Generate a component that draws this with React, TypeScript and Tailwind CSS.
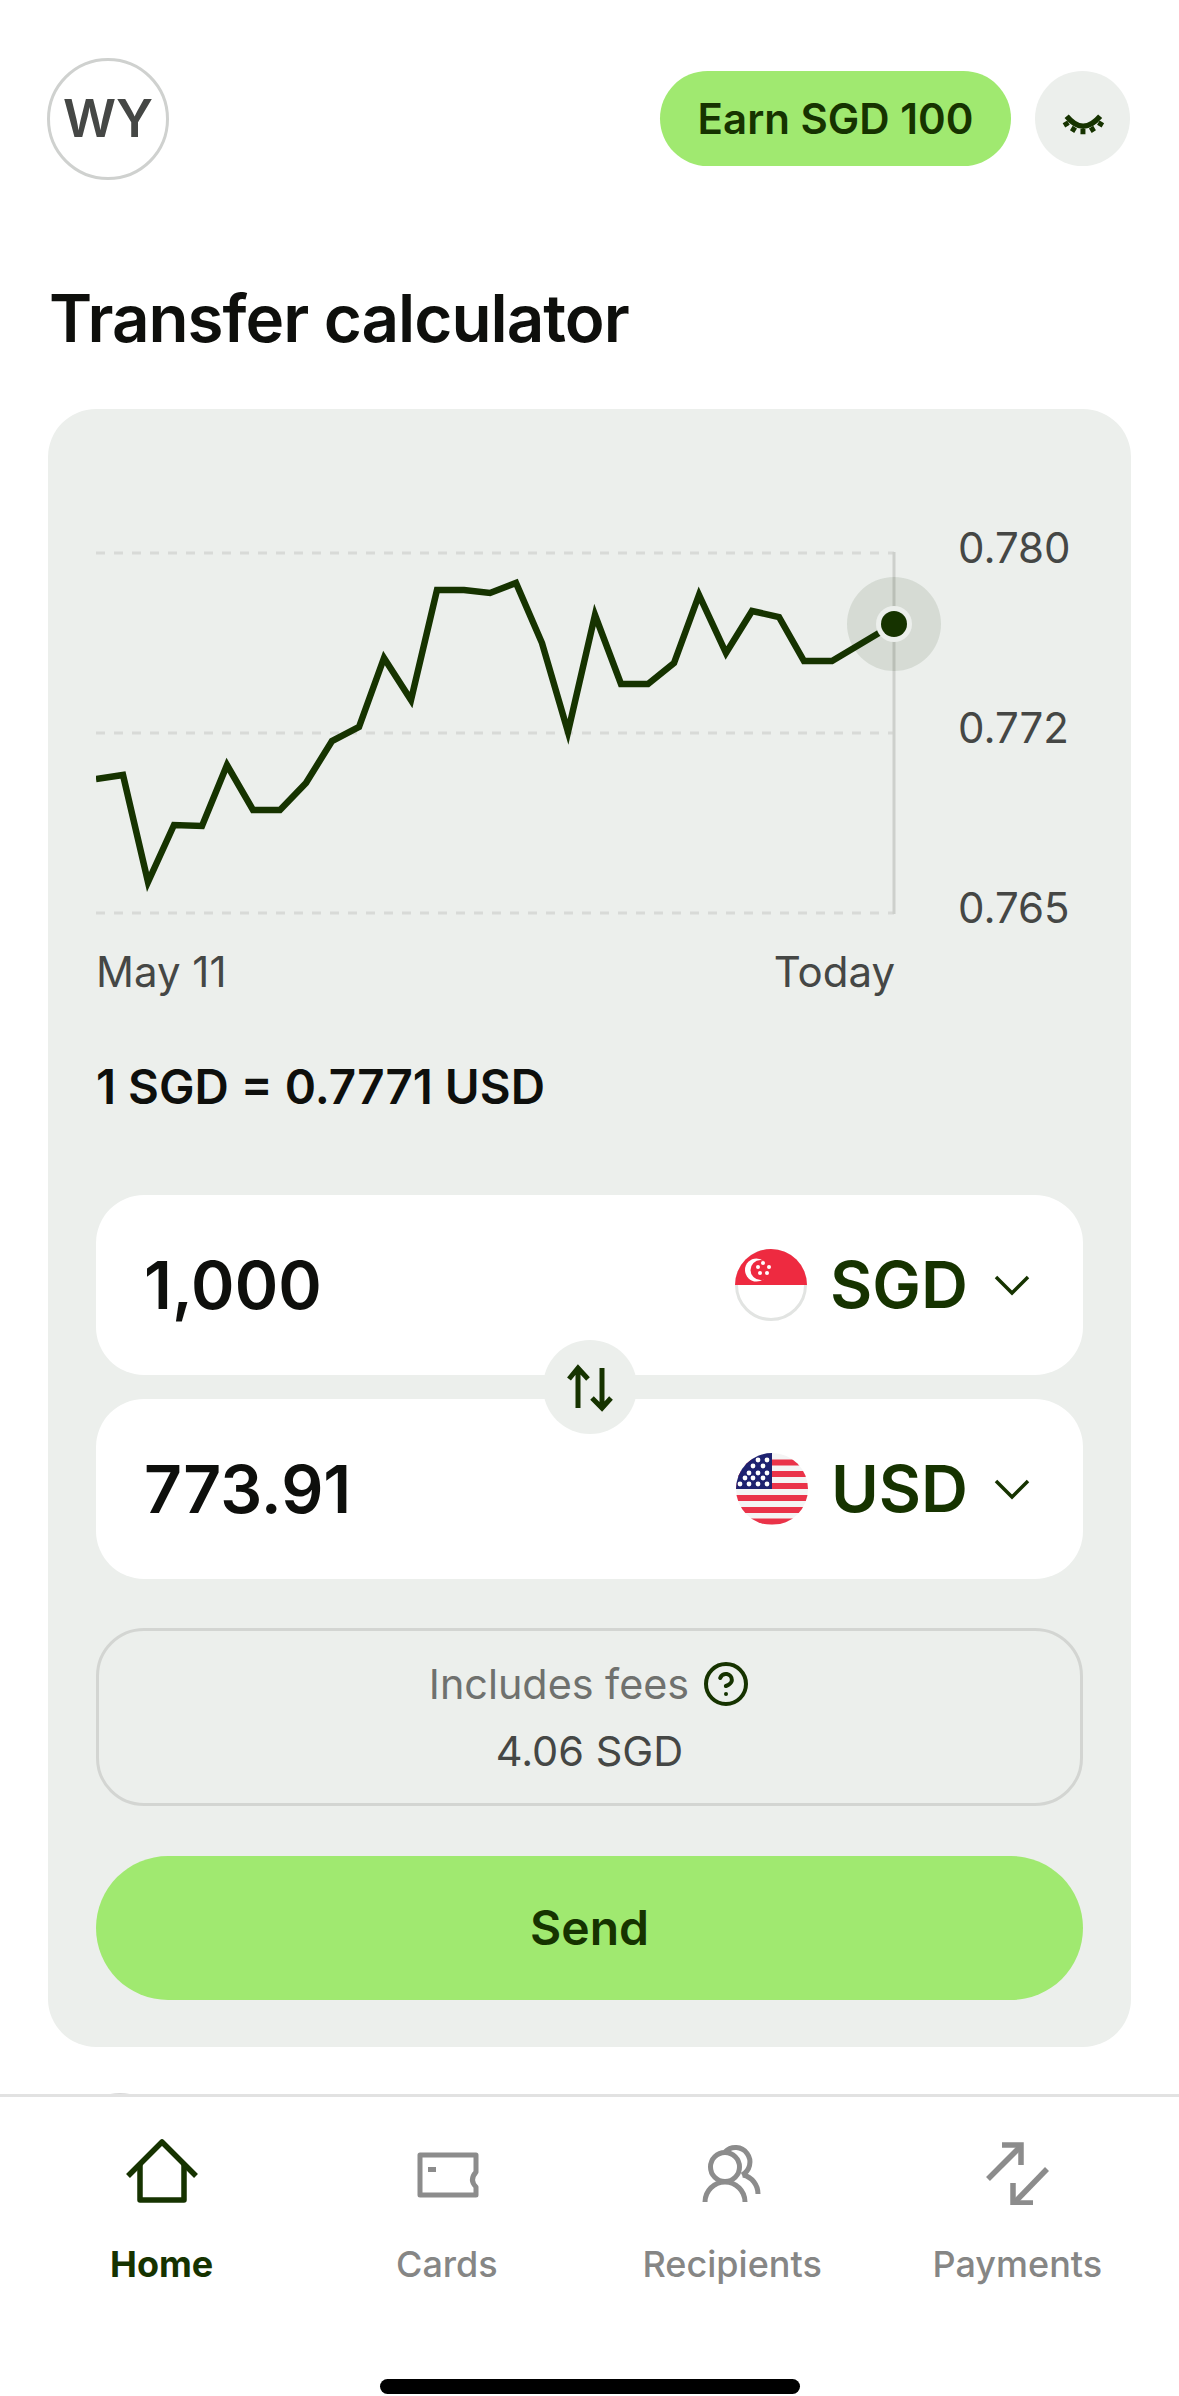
import React from 'react';
import { CircleHelp } from 'lucide-react';

const chartPoints = [
  [96, 779], [123, 775], [148, 882], [174, 825], [202, 826], [227, 765], [253, 810], [280, 810],
  [306, 783], [332, 741], [359, 727], [384, 658], [411, 700], [437, 590], [464, 590], [490, 593],
  [516, 583], [542, 643], [568, 732], [595, 615], [621, 684], [648, 684], [674, 663], [699, 595],
  [726, 653], [752, 611], [779, 617], [804, 661], [832, 661], [894, 624],
];

const usStars = [
  [22, 7], [31, 7], [17, 13], [27, 13], [13, 20], [22, 20], [31, 20], [9, 25], [17, 25], [27, 25],
  [4, 31], [13, 31], [22, 31], [31, 31],
];

function SgFlag() {
  return (
    <svg width="72" height="72" viewBox="0 0 72 72" className="shrink-0">
      <circle cx="36" cy="36" r="34.5" fill="#fff" stroke="#e2e4e2" strokeWidth="3" />
      <path d="M0 36 A36 36 0 0 1 72 36 Z" fill="#ee2a40" />
      <circle cx="21.5" cy="21" r="11.5" fill="#fff" />
      <circle cx="25.5" cy="21" r="10" fill="#ee2a40" />
      <circle cx="28" cy="14" r="2" fill="#fff" />
      <circle cx="23" cy="18" r="2" fill="#fff" />
      <circle cx="34" cy="18" r="2" fill="#fff" />
      <circle cx="25" cy="24" r="2" fill="#fff" />
      <circle cx="32" cy="24" r="2" fill="#fff" />
    </svg>
  );
}

function UsFlag() {
  return (
    <svg width="72" height="72" viewBox="0 0 72 72" className="shrink-0">
      <defs>
        <clipPath id="us-clip">
          <circle cx="36" cy="36" r="36" />
        </clipPath>
      </defs>
      <g clipPath="url(#us-clip)">
        <rect width="72" height="72" fill="#f4f4f4" />
        {[6.5, 18, 30, 42, 54, 65.5].map((y) => (
          <rect key={y} x="0" y={y} width="72" height="6" fill="#ea3349" />
        ))}
        <rect width="36" height="36" fill="#1e2270" />
        {usStars.map(([x, y]) => (
          <circle key={`${x}-${y}`} cx={x} cy={y} r="2.4" fill="#fff" />
        ))}
      </g>
    </svg>
  );
}

function Chevron() {
  return (
    <svg width="36" height="22" viewBox="0 0 36 22" className="shrink-0">
      <path d="M2 3 L18 19 L34 3" fill="none" stroke="#163300" strokeWidth="3.5" />
    </svg>
  );
}

function CurrencyRow({ amount, code, flag }: { amount: string; code: string; flag: React.ReactNode }) {
  return (
    <div className="h-[180px] bg-white rounded-[48px] pl-[48px] pr-[53px] flex items-center">
      <div className="text-[66px] font-semibold text-[#0e0f0c]">{amount}</div>
      <div className="ml-auto flex items-center">
        {flag}
        <div className="ml-[23px] mr-[26px] text-[65px] font-semibold text-[#163300]">{code}</div>
        <Chevron />
      </div>
    </div>
  );
}

function HomeIcon() {
  return (
    <svg width="80" height="70" viewBox="0 0 80 70" fill="none" stroke="#163300" strokeWidth="5.5" strokeLinejoin="round">
      <path d="M6 41 L40 7 L74 41" />
      <path d="M18 29 V65 H62 V29" />
    </svg>
  );
}

function CardIcon() {
  return (
    <svg width="80" height="70" viewBox="0 0 80 70" fill="none" stroke="#8c8c8c" strokeWidth="5" strokeLinejoin="round">
      <path d="M13 20 H69 V37 Q62 45 69 52 V60 H13 Z" />
      <rect x="21" y="32" width="8" height="5" fill="#8c8c8c" stroke="none" />
    </svg>
  );
}

function RecipientsIcon() {
  return (
    <svg width="80" height="70" viewBox="0 0 80 70" fill="none" stroke="#8c8c8c" strokeWidth="5">
      <circle cx="33" cy="32" r="14.5" />
      <path d="M33 17 A14.5 14.5 0 1 1 50 40" />
      <path d="M13 67 A20 20 0 0 1 53 67" />
      <path d="M51 40 C60 42 66 50 66 59" />
    </svg>
  );
}

function PaymentsIcon() {
  return (
    <svg width="80" height="70" viewBox="0 0 80 70" fill="none" stroke="#8c8c8c" strokeWidth="5.5">
      <path d="M11 44 L44 11" />
      <path d="M25 10 H44 V30" />
      <path d="M70 34 L37 68" />
      <path d="M36 48 V68 H56" />
    </svg>
  );
}

function NavItem({ icon, label, active }: { icon: React.ReactNode; label: string; active?: boolean }) {
  return (
    <div className="flex flex-col items-center">
      {icon}
      <div className={active ? 'mt-[37px] h-[44px] leading-[44px] text-[36px] font-bold text-[#163300]' : 'mt-[37px] h-[44px] leading-[44px] text-[36px] font-medium text-[#868685]'}>
        {label}
      </div>
    </div>
  );
}

export default function App() {
  return (
    <div className="w-[1179px] h-[2396px] bg-white flex flex-col overflow-hidden font-['Inter',sans-serif]">
      <div className="flex-1 min-h-0 overflow-hidden">
        <div className="pt-[58px] pl-[47px] pr-[49px] flex justify-between items-start">
          <div className="w-[122px] h-[122px] rounded-full border-[3px] border-[#cfd1cf] flex items-center justify-center text-[52px] font-semibold text-[#454745]">
            WY
          </div>
          <div className="mt-[13px] flex items-center gap-[24px]">
            <div className="w-[351px] h-[95px] rounded-full bg-[#a0e970] flex items-center justify-center text-[42px] font-semibold text-[#163300]">
              Earn SGD 100
            </div>
            <div className="w-[95px] h-[95px] rounded-full bg-[#ecefec] flex items-center justify-center">
              <svg width="95" height="95" viewBox="0 0 105 105" fill="none" stroke="#163300">
                <path d="M35 50 Q53 72 72 50" strokeWidth="6" />
                <path d="M37 57 L32 60 M44 62 L41 67 M53 64 V70 M62 62 L65 67 M70 57 L75 60" strokeWidth="5.5" />
              </svg>
            </div>
          </div>
        </div>

        <h1 className="mt-[101px] ml-[49px] h-[76px] leading-[76px] text-[65.5px] font-semibold tracking-[-1px] text-[#0e0f0c]">
          Transfer calculator
        </h1>

        <div className="mt-[52px] mx-[48px] w-[1083px] rounded-[48px] bg-[#ecefec] pt-[119px] px-[48px] pb-[47px]">
          <div className="flex">
            <svg width="850" height="400" viewBox="96 528 850 400" fill="none" className="shrink-0">
              {[553, 733, 913].map((y) => (
                <line key={y} x1="96" x2="894" y1={y} y2={y} stroke="#d8dad7" strokeWidth="3" strokeDasharray="9 9" />
              ))}
              <line x1="894" x2="894" y1="552" y2="914" stroke="#cdd0cc" strokeWidth="3" />
              <polyline
                points={chartPoints.map((p) => p.join(',')).join(' ')}
                stroke="#163300"
                strokeWidth="6.5"
                strokeLinejoin="miter"
              />
              <circle cx="894" cy="624" r="47" fill="#163300" fillOpacity="0.1" />
              <circle cx="894" cy="624" r="18" fill="#ecefec" />
              <circle cx="894" cy="624" r="13" fill="#163300" />
            </svg>
            <div className="ml-[12px] h-[400px] flex flex-col justify-between text-[42px] leading-[40px] text-[#454745]">
              <div>0.780</div>
              <div>0.772</div>
              <div>0.765</div>
            </div>
          </div>

          <div className="mt-[20px] w-[799px] flex justify-between text-[42px] leading-[48px] text-[#454745]">
            <div>May 11</div>
            <div>Today</div>
          </div>

          <div className="mt-[67px] text-[47.5px] leading-[48px] font-semibold text-[#0e0f0c]">1 SGD = 0.7771 USD</div>

          <div className="mt-[84px] relative flex flex-col gap-[24px]">
            <CurrencyRow amount="1,000" code="SGD" flag={<SgFlag />} />
            <CurrencyRow amount="773.91" code="USD" flag={<UsFlag />} />
            <div className="absolute left-[447px] top-[145px] w-[94px] h-[94px] rounded-full bg-[#ecefec] flex items-center justify-center">
              <svg width="94" height="94" viewBox="0 0 94 94" fill="none" stroke="#163300" strokeWidth="5">
                <path d="M35 68 V28 M26 39 L35 28 L45 39" />
                <path d="M59 28 V68 M49 58 L59 68 L68 58" />
              </svg>
            </div>
          </div>

          <div className="mt-[49px] h-[178px] rounded-[48px] border-[3px] border-[#d3d5d2] flex flex-col items-center justify-center gap-[20px]">
            <div className="flex items-center gap-[13px] text-[41.3px] leading-[46px] text-[#6f716e]">
              Includes fees
              <CircleHelp size={48} strokeWidth={2} color="#163300" />
            </div>
            <div className="text-[41.5px] leading-[46px] text-[#454745]">4.06 SGD</div>
          </div>

          <div className="mt-[50px] h-[144px] rounded-full bg-[#a0e970] flex items-center justify-center text-[48px] font-semibold text-[#163300]">
            Send
          </div>
        </div>

        <div className="mt-[46px] ml-[72px] w-[96px] h-[96px] rounded-full bg-[#d8d8d8]" />
      </div>

      <div className="h-[302px] shrink-0 border-t-[3px] border-[#e2e2e2] bg-white">
        <div className="pt-[38px] px-[19px] grid grid-cols-4">
          <NavItem icon={<HomeIcon />} label="Home" active />
          <NavItem icon={<CardIcon />} label="Cards" />
          <NavItem icon={<RecipientsIcon />} label="Recipients" />
          <NavItem icon={<PaymentsIcon />} label="Payments" />
        </div>
        <div className="mt-[93px] mx-auto w-[420px] h-[15px] rounded-full bg-black" />
      </div>
    </div>
  );
}
